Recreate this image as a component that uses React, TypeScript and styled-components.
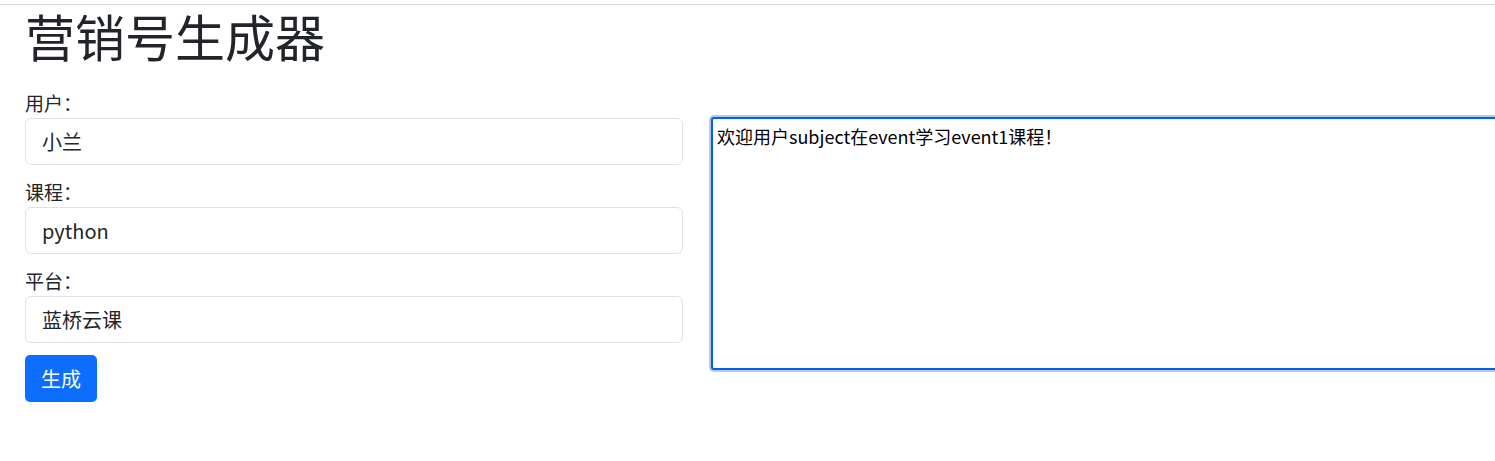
import React from "react";
import styled, { createGlobalStyle } from "styled-components";

const Global = createGlobalStyle`
  html, body {
    margin: 0;
    padding: 0;
    background: #fff;
    overflow: hidden;
  }
  body {
    font-family: "Noto Sans CJK SC", "Noto Sans", sans-serif;
    color: #212529;
  }
`;

const Page = styled.div`
  padding-top: 4px;
`;

const Rule = styled.div`
  border-top: 1px solid #d6d6d6;
`;

const Container = styled.div`
  padding: 0 0 0 25px;
`;

const Title = styled.h1`
  margin: 0;
  font-size: 50px;
  font-weight: 400;
  line-height: 60px;
  color: #212529;
`;

const Row = styled.div`
  display: flex;
  align-items: flex-start;
  gap: 28px;
  margin-top: 23px;
`;

const FormCol = styled.div`
  width: 658px;
  flex: none;
  display: flex;
  flex-direction: column;
`;

const Field = styled.div`
  display: flex;
  flex-direction: column;
  margin-bottom: 12px;
`;

const Label = styled.label`
  font-size: 19px;
  line-height: 30px;
  height: 30px;
`;

const Input = styled.input`
  box-sizing: border-box;
  height: 47px;
  width: 100%;
  padding: 0 16px;
  font-family: inherit;
  font-size: 20px;
  color: #212529;
  border: 1px solid #dee2e6;
  border-radius: 6px;
  background: #fff;
  outline: none;
`;

const Button = styled.button`
  align-self: flex-start;
  box-sizing: border-box;
  height: 47px;
  padding: 0 16px;
  font-family: inherit;
  font-size: 20px;
  color: #fff;
  background: #0d6efd;
  border: none;
  border-radius: 5px;
`;

const Output = styled.textarea`
  box-sizing: border-box;
  flex: none;
  width: 820px;
  height: 253px;
  margin-top: 29px;
  padding: 6px 4px 4px;
  font-family: inherit;
  font-size: 18px;
  line-height: 1.3;
  color: #000;
  border: 2px solid #0062e3;
  border-radius: 3px;
  box-shadow: 0 0 0 2px #b3c8ec;
  outline: none;
  resize: none;
`;

export default function App() {
  return (
    <Page>
      <Global />
      <Rule />
      <Container>
        <Title>营销号生成器</Title>
        <Row>
          <FormCol>
            <Field>
              <Label>用户：</Label>
              <Input defaultValue="小兰" />
            </Field>
            <Field>
              <Label>课程：</Label>
              <Input defaultValue="python" />
            </Field>
            <Field>
              <Label>平台：</Label>
              <Input defaultValue="蓝桥云课" />
            </Field>
            <Button>生成</Button>
          </FormCol>
          <Output defaultValue="欢迎用户subject在event学习event1课程！" />
        </Row>
      </Container>
    </Page>
  );
}
